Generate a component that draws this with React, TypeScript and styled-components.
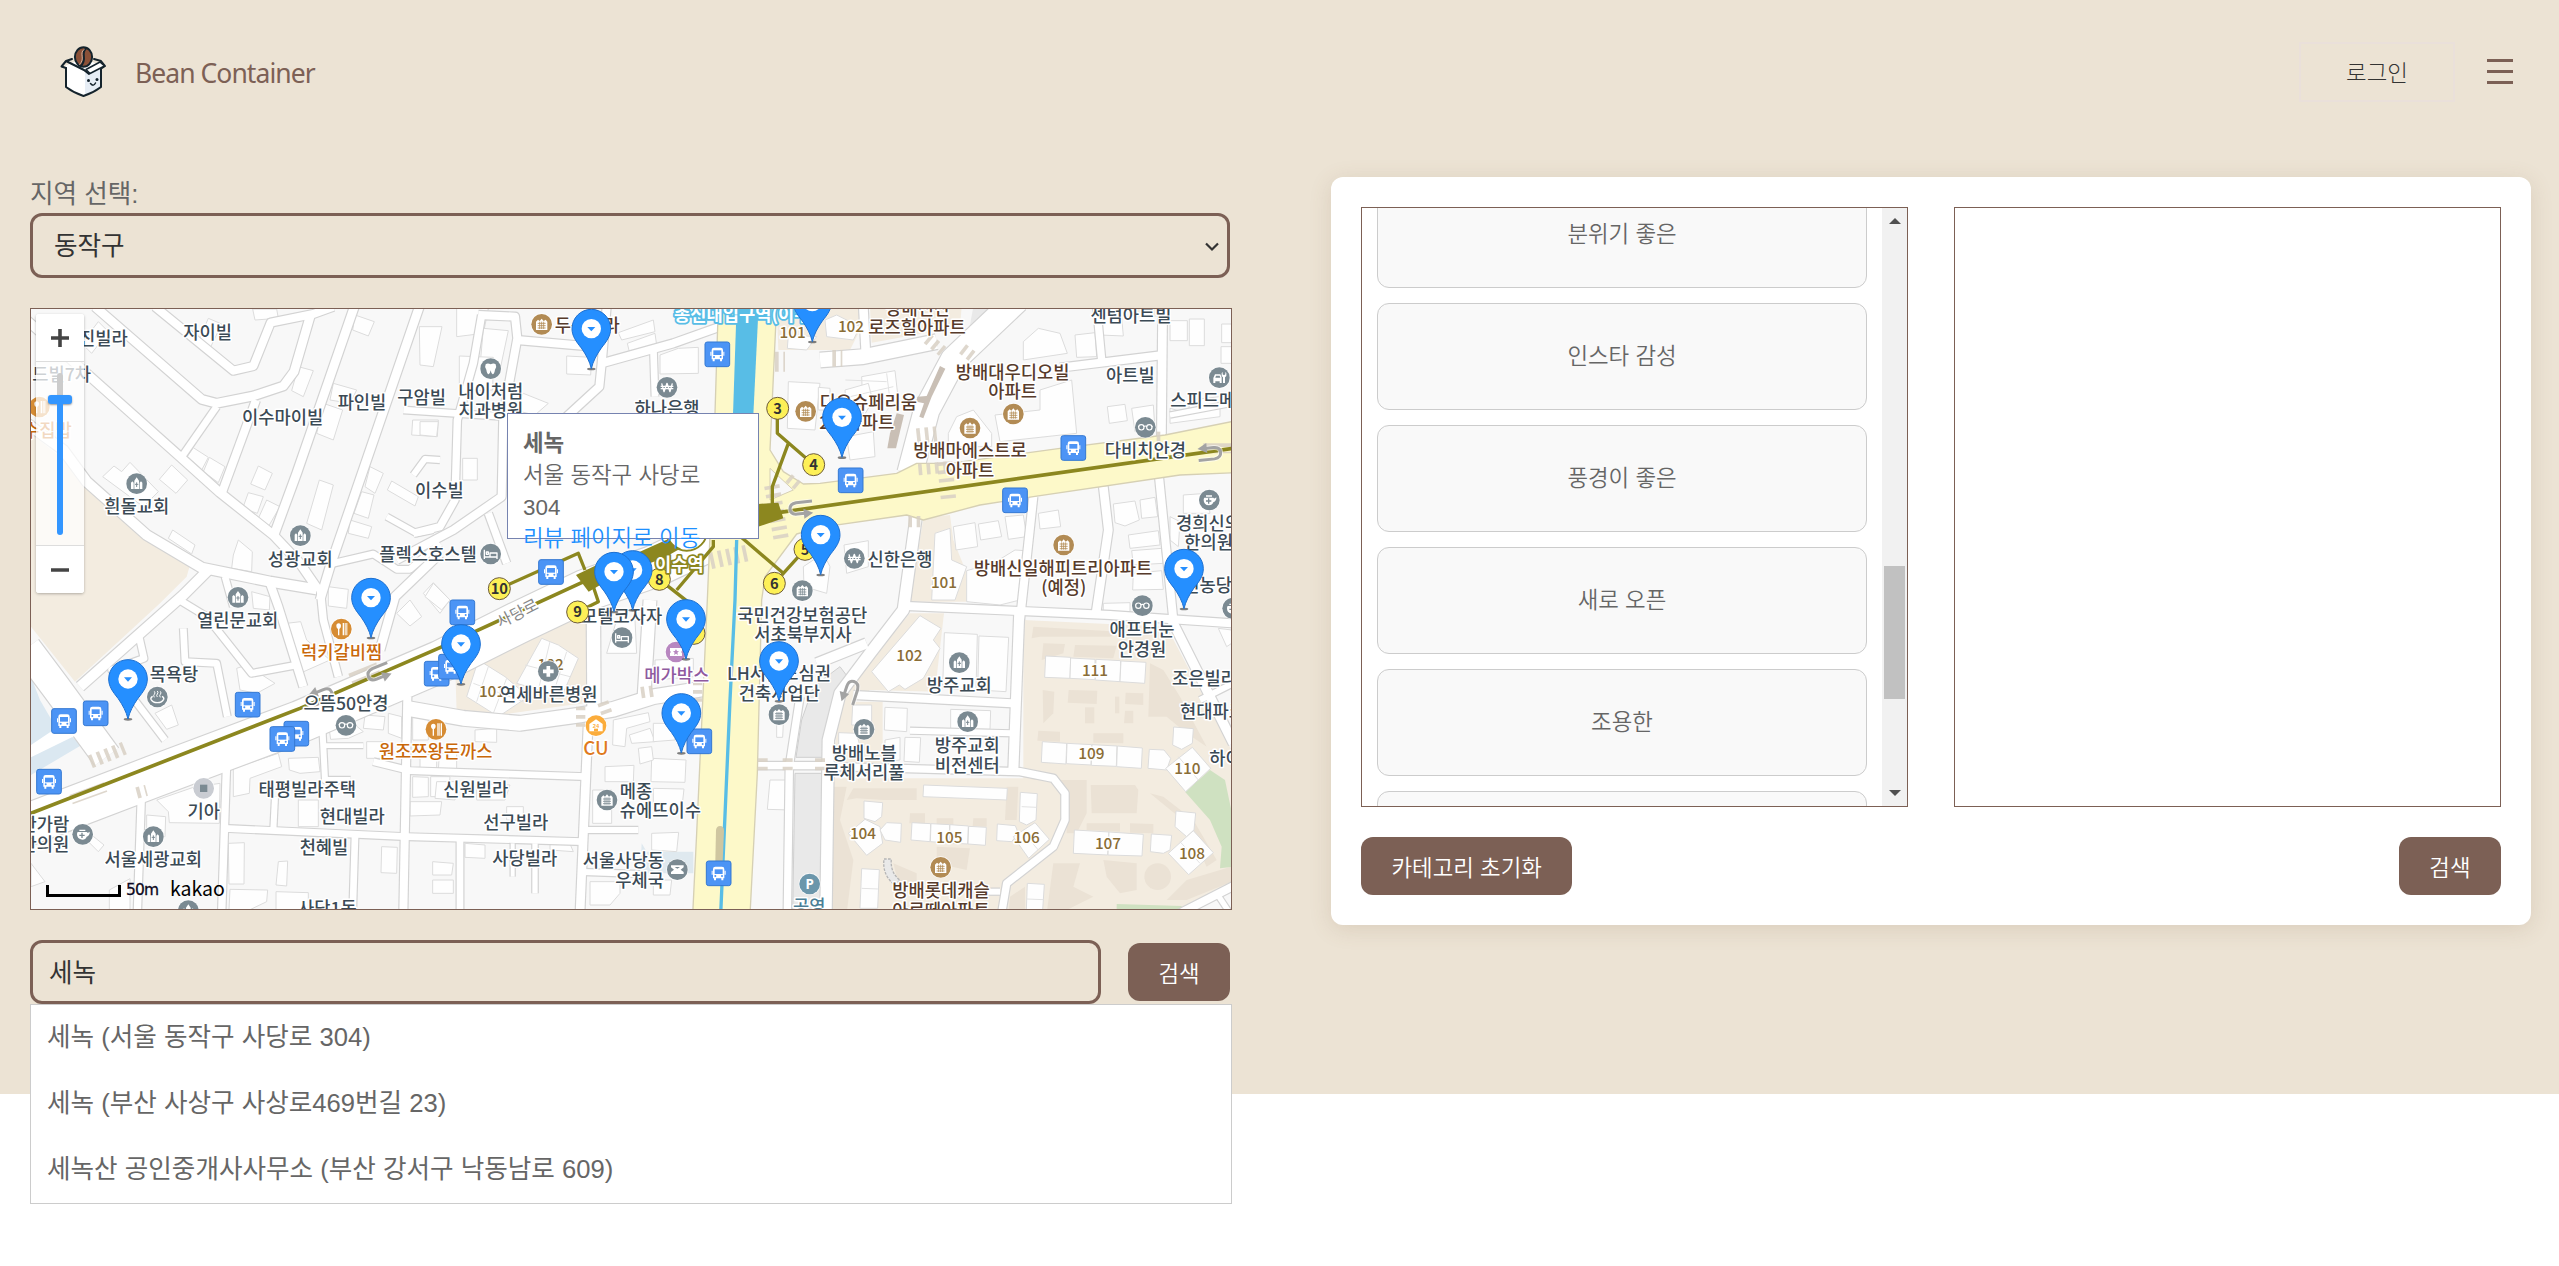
import React from "react";
import styled, { createGlobalStyle } from "styled-components";

const BROWN = "#7c6055";
const CREAM = "#ece3d4";
const UI = `"Liberation Sans", "Noto Sans CJK KR", sans-serif`;
const MAP_FONT = `"Noto Sans CJK KR", "Noto Sans", sans-serif`;

const Global = createGlobalStyle`
  * { box-sizing: border-box; }
  body { margin: 0; min-height: 1266px; background: #fff; font-family: ${UI}; color: #666; }
  button, input { font-family: inherit; }
`;

const Screen = styled.div`
  height: 1266px;
  background: linear-gradient(${CREAM} 1094px, #fff 1094px);
  font-size: 25.6px;
`;
const Header = styled.header`
  height: 177px;
  padding: 42px 46px 0 60px;
  display: flex;
  justify-content: space-between;
  align-items: flex-start;
`;
const Brand = styled.div`
  display: flex;
  align-items: center;
  height: 60px;
  gap: 28px;
`;
const BrandName = styled.span`
  font-family: "Noto Sans", "Open Sans", sans-serif;
  font-size: 26.5px;
  line-height: 60px;
  letter-spacing: -0.95px;
  padding-top: 2px;
  color: ${BROWN};
`;
const HeaderActions = styled.div`
  display: flex;
  align-items: center;
  gap: 32px;
`;
const LoginButton = styled.button`
  width: 156px;
  height: 60px;
  border: 2px solid #eae0da;
  background: transparent;
  color: #333;
  font-size: 22.4px;
  font-weight: 300;
  padding: 0 0 3px;
`;
const MenuButton = styled.button`
  width: 26px;
  height: 25px;
  padding: 0;
  border: 0;
  margin-bottom: 1px;
  background: transparent;
  display: flex;
  flex-direction: column;
  justify-content: space-between;
`;
const MenuBar = styled.span`
  height: 3px;
  background: ${BROWN};
`;

const Main = styled.main`
  display: flex;
  align-items: flex-start;
  padding: 0 28px 0 30px;
  gap: 99px;
`;
const LeftColumn = styled.section`
  width: 1202px;
  display: flex;
  flex-direction: column;
`;
const RegionLabel = styled.label`
  height: 36px;
  line-height: 35px;
  color: #666;
`;
const RegionSelect = styled.div`
  width: 1200px;
  height: 65px;
  border: 3px solid ${BROWN};
  border-radius: 12px;
  padding: 0 8px 4px 21px;
  display: flex;
  align-items: center;
  justify-content: space-between;
  color: #333;

  svg {
    position: relative;
    top: 3px;
  }
`;
const MapFrame = styled.div`
  position: relative;
  width: 1202px;
  height: 602px;
  margin: 30px 0;
  border: 1px solid ${BROWN};
  overflow: hidden;
  background: #f8f8f8;
`;
const SearchRow = styled.form`
  display: flex;
  align-items: center;
  gap: 27px;
  height: 64px;
`;
const SearchInput = styled.input`
  width: 1071px;
  height: 64px;
  border: 3px solid ${BROWN};
  border-radius: 12px;
  padding: 0 15px 3px 16px;
  background: transparent;
  font-size: 25.6px;
  color: #333;
  outline: none;
`;
const BrownButton = styled.button`
  height: 58px;
  padding: 0 30.5px 1px;
  border: 0;
  border-radius: 12px;
  background: ${BROWN};
  color: #fff;
  font-size: 22.4px;
  font-weight: 350;
  white-space: nowrap;
`;
const Suggestions = styled.ul`
  list-style: none;
  margin: 0;
  padding: 0;
  width: 1202px;
  border: 1px solid #ccc;
  background: #fff;
`;
const Suggestion = styled.li`
  height: 66px;
  line-height: 64px;
  padding: 0 16px;
`;

const Card = styled.section`
  width: 1200px;
  height: 748px;
  padding: 30px;
  border-radius: 12px;
  background: #fff;
  box-shadow: 0 4px 22px rgba(124, 96, 60, 0.16);
  display: flex;
  flex-direction: column;
  gap: 30px;
`;
const Panels = styled.div`
  display: flex;
  gap: 46px;
`;
const Panel = styled.div`
  display: flex;
  justify-content: space-between;
  width: 547px;
  height: 600px;
  border: 1px solid ${BROWN};
  overflow: hidden;
`;
const CategoryList = styled.div`
  margin: -27px 0 0 15px;
  width: 490px;
  display: flex;
  flex-direction: column;
  gap: 15px;
`;
const Category = styled.div`
  flex: none;
  height: 107px;
  border: 1px solid #ccc;
  border-radius: 12px;
  background: #f9f9f9;
  display: flex;
  align-items: center;
  justify-content: center;
  font-size: 22.4px;
  font-weight: 350;
  padding-bottom: 5px;
`;
const ScrollTrack = styled.div`
  width: 25px;
  height: 598px;
  padding: 10px 2px;
  background: #f1f1f1;
  display: flex;
  flex-direction: column;
  align-items: center;
`;
const ScrollThumb = styled.div`
  width: 21px;
  height: 133px;
  margin: 342px 0 91px;
  background: #c1c1c1;
`;
const CardActions = styled.div`
  display: flex;
  justify-content: space-between;
`;

const MapSvg = styled.svg`
  display: block;
  width: 1200px;
  height: 600px;
`;
const InfoWindow = styled.div`
  position: absolute;
  left: 476px;
  top: 104px;
  width: 252px;
  height: 126px;
  padding: 14px 15px;
  border: 1px solid #7683b0;
  background: #fff;
  font-size: 22.4px;
  font-weight: 350;
  line-height: 32px;
`;
const InfoName = styled.strong`
  display: block;
`;
const InfoAddress = styled.span`
  display: block;
  line-height: 32px;
`;
const InfoLink = styled.a`
  display: block;
  color: #1e90ff;
  line-height: 29px;
  white-space: nowrap;
`;
const ZoomControl = styled.div`
  position: absolute;
  left: 5px;
  top: 5px;
  width: 48px;
  height: 279px;
  border-radius: 3px;
  background: rgba(255, 255, 255, 0.75);
  box-shadow: 0 1px 3px rgba(0, 0, 0, 0.28);
  display: flex;
  flex-direction: column;
  justify-content: space-between;
  align-items: center;
  overflow: hidden;
`;
const ZoomButton = styled.div<{ $edge: "top" | "bottom" }>`
  width: 48px;
  height: 48px;
  background: #fff;
  ${(p) => (p.$edge === "top" ? "border-bottom" : "border-top")}: 1px solid #ddd;
  display: flex;
  align-items: center;
  justify-content: center;
`;
const ZoomTrack = styled.div`
  width: 24px;
  height: 162px;
  display: flex;
  flex-direction: column;
  align-items: center;
`;
const TrackRest = styled.div`
  width: 6px;
  height: 22px;
  border-radius: 3px 3px 0 0;
  background: #ccc;
`;
const TrackHandle = styled.div`
  width: 24px;
  height: 9px;
  border-radius: 3px;
  background: #3396ff;
  box-shadow: 0 1px 2px rgba(0, 0, 0, 0.4);
`;
const TrackFill = styled.div`
  width: 6px;
  flex: 1;
  border-radius: 0 0 3px 3px;
  background: #3396ff;
`;
const ScaleBar = styled.div`
  position: absolute;
  left: 15px;
  bottom: 12px;
  display: flex;
  align-items: flex-end;
  color: #000;
`;
const ScaleRule = styled.div`
  width: 75px;
  height: 12px;
  border: 3px solid #000;
  border-top: 0;
`;
const ScaleText = styled.span`
  margin: 0 11px 0 5px;
  font: 15.5px/13px "DejaVu Sans", sans-serif;
  letter-spacing: -0.8px;
  color: #0c0820;
  -webkit-text-stroke: 0.3px #0c0820;
  width: 33px;
  height: 13px;
  text-shadow: 0 0 2px #fff;
`;
const KakaoMark = styled.span`
  font: 400 19.5px/20px ${MAP_FONT};
  height: 19px;
`;

/* ---------- map geometry (drawn in a space three times the page scale) ---------- */

const ROADS: [string, number][] = [
  ["225,20 545,298 590,310 700,288 790,258 822,215 870,50", 26],
  ["20,60 480,470 600,578 760,705 840,790 895,870", 26],
  ["405,20 640,212 700,198 752,68 880,42 940,20", 24],
  ["590,320 482,475", 20],
  ["708,300 605,580", 24],
  ["1003,20 830,520 762,705", 26],
  ["1198,20 930,800 900,900", 26],
  ["20,370 130,450 200,545 380,705 545,803 750,845 890,868", 30],
  ["565,810 490,885 180,1160", 30],
  ["20,1045 110,1165 260,1370", 86],
  ["20,1575 400,1430 840,1265 1260,1085 1500,965 1700,870 1900,800 2070,720", 124],
  ["490,985 495,1085 590,1090 622,1250", 20],
  ["470,895 560,950 695,1120 830,1095", 20],
  ["750,850 775,920 850,1160", 24],
  ["355,1000 372,1075 275,1110 435,1320", 20],
  ["615,830 640,920", 20],
  ["940,790 1060,762 1130,808 1170,808 1260,730", 20],
  ["1100,650 1190,700 1240,690", 18],
  ["1180,525 1215,477 1260,480", 18],
  ["1150,330 1460,350", 20],
  ["900,860 910,960 955,1130", 22],
  ["1260,760 1125,890 1080,1050", 26],
  ["620,1380 605,1840", 22],
  ["365,1460 352,1840", 22],
  ["612,1585 1160,1610 1690,1625", 20],
  ["1005,1610 998,1840", 20],
  ["1162,1190 1150,1840", 24],
  ["765,1490 760,1590", 18],
  ["905,1240 915,1440 992,1440", 18],
  ["915,1337 1030,1337", 14],
  ["1060,1385 1170,1412 1700,1430", 20],
  ["1704,1280 1680,1840", 26],
  ["1320,1620 1320,1840", 20],
  ["1478,1630 1478,1730", 12],
  ["1545,1630 1545,1780", 16],
  ["1690,1590 1855,1590", 18],
  ["1690,1716 1860,1722", 18],
  ["1160,1225 1330,1255 1500,1270 1680,1245 1780,1228 1900,1190 2060,1165", 44],
  ["1720,900 1722,1230", 40],
  ["1890,900 1872,1190", 38],
  ["1385,45 1360,190 1312,360 1305,600 1260,680 1180,700", 22],
  ["1375,45 1485,50 1492,115 1450,345 1445,590 1300,690 1130,780", 24],
  ["1490,120 1740,142", 24],
  ["1745,190 1960,130 2100,80", 24],
  ["1760,20 1745,190 1738,260 1640,350", 24],
  ["1900,140 1905,290", 20],
  ["1405,640 1460,790", 22],
  ["2400,180 2530,170 2750,125", 44],
  ["2530,20 2537,150", 26],
  ["2990,0 2800,180 2720,330 2670,520", 76],
  ["3230,20 3246,190", 22],
  ["3428,20 3424,430", 26],
  ["3120,203 3430,165", 24],
  ["3450,345 3635,310", 16],
  ["3040,590 3000,960", 24],
  ["3250,560 3265,690 3228,940", 26],
  ["3416,520 3460,960", 24],
  ["2690,640 2650,930 2550,1060 2460,1180 2425,1320 2418,1840", 34],
  ["2660,918 3270,945 3640,970", 24],
  ["2998,930 2980,1412", 30],
  ["2500,1185 2975,1210", 24],
  ["2190,1397 2440,1397 2440,1400 3000,1415 3100,1435 3135,1480 3135,1560 3100,1640 2960,1750 2945,1840", 22],
  ["2940,1775 2890,1775", 18],
  ["3455,960 3640,1330", 28],
  ["3480,1840 3640,1758", 24],
  ["3590,1780 3630,1840", 16],
  ["2670,1292 2975,1300", 18],
  ["2390,1090 2540,1030", 30],
  ["2340,1190 2308,1397 2302,1840", 22],
  ["3540,1200 3640,1150", 18],
];

const WHITE_BUILDINGS: string[] = [
  "698,27 770,27 775,55 705,60", "1005,45 1063,65 1045,108 998,90", "835,200 880,212 850,290 815,272",
  "910,310 968,330 940,420 890,400", "940,250 1010,270 990,310 930,300", "1178,360 1255,360 1252,410 1175,405",
  "565,55 605,72 570,145 535,125", "235,65 265,95 215,160 185,130",
  "520,443 565,472 545,510 495,480", "568,472 615,500 595,548 550,515", "715,498 757,520 735,570 692,552",
  "685,578 730,590 712,640 668,625", "740,600 780,620 745,680 715,655", "898,540 940,555 905,690 860,670",
  "330,487 415,575 370,620 248,530 282,498 305,515", "455,495 503,540 468,580 418,538",
  "1050,500 1090,520 1065,580 1035,560", "1115,543 1195,590 1185,618 1102,570", "1025,575 1062,585 1045,655 1002,640",
  "458,690 525,735 515,762 445,715", "655,720 697,755 695,815 635,805 640,765", "990,660 1055,680 1045,715 985,700",
  "925,860 985,868 980,925 925,918", "1240,848 1290,900 1260,940 1210,880", "695,875 750,890 748,930 700,925",
  "1170,900 1205,950 1170,978 1130,940", "650,1105 680,1095 765,1150 710,1180 660,1170", "800,970 842,965 860,1020 930,1080 840,1120",
  "455,1215 475,1275 440,1288 405,1240", "640,1405 775,1360 785,1400 690,1435 688,1480 640,1490",
  "805,1375 895,1372 900,1415 840,1420 808,1410", "410,1500 520,1462 600,1450 598,1570 448,1568 445,1535",
  "625,1630 673,1628 672,1752 627,1752", "1085,1640 1132,1642 1130,1720 1083,1718", "775,1685 803,1683 800,1758 768,1755",
  "630,1768 743,1770 740,1805 688,1830 627,1830", "768,1775 865,1778 865,1830 768,1830", "380,1545 437,1550 435,1610 380,1608",
  "268,1770 330,1736 330,1830 268,1830", "33,1690 75,1745 33,1760", "215,1605 252,1635 235,1655 200,1620",
  "925,1270 975,1250 1030,1295 985,1315 932,1318", "1035,1245 1095,1250 1090,1290 1030,1285", "1105,1240 1145,1250 1145,1315 1105,1300",
  "1178,1235 1225,1240 1225,1320 1178,1320", "1040,1325 1090,1325 1090,1375 1040,1375", "835,1500 895,1500 895,1580 835,1580",
  "1178,1430 1225,1432 1225,1490 1178,1492", "1232,1430 1290,1430 1285,1490 1232,1490", "1170,1505 1265,1505 1260,1545 1170,1548",
  "1238,1685 1300,1690 1295,1725 1238,1725", "1238,1740 1300,1740 1300,1780 1238,1780",
  "1198,80 1266,80 1240,200 1200,195", "1310,0 1405,27 1390,100 1310,110",
  "1390,85 1465,92 1440,210 1380,200", "1318,168 1420,172 1418,270 1318,272", "1640,168 1715,172 1712,225 1640,222",
  "1795,98 1900,60 1905,95 1805,120", "1822,130 1905,100 1910,135 1828,155", "1920,165 1975,145 2035,142 2035,220 1920,222",
  "1200,365 1255,365 1250,410 1200,405", "1328,475 1372,475 1372,540 1328,540", "1510,280 1585,310 1545,345 1480,330",
  "1240,850 1290,900 1265,930 1215,890", "2305,245 2400,250 2385,390 2302,385", "2395,262 2430,265 2430,330 2395,330",
  "2305,105 2390,110 2360,150 2302,145", "2415,60 2450,45 2520,80 2500,120 2420,110",
  "2525,230 2625,212 2635,300 2560,300 2530,350", "2475,270 2545,250 2560,310 2480,330",
  "2480,410 2560,395 2565,470 2490,480", "3010,125 3055,85 3120,100 3142,160 3010,180", "3165,105 3225,98 3230,170 3170,172",
  "3235,45 3305,50 3310,108 3240,105", "3450,62 3502,62 3502,122 3450,122", "3508,57 3553,57 3553,137 3508,137",
  "3605,72 3635,72 3635,128 3605,128", "3603,140 3635,140 3635,190 3603,190", "2785,400 2810,350 2860,330 2915,400 2915,440 2785,440",
  "2925,345 3060,330 3060,270 3155,240 3170,400 2940,425", "3262,320 3315,313 3322,362 3268,370", "3335,325 3400,315 3405,390 3345,395",
  "3450,325 3505,340 3510,300 3600,290 3600,350 3450,370", "2800,680 2865,668 2873,740 2808,750", "2875,672 2935,662 2945,710 2882,720",
  "2955,650 3010,645 3020,710 2965,718", "3055,640 3115,630 3122,680 3060,687", "3280,612 3345,603 3358,660 3315,678 3285,668",
  "3360,600 3405,592 3413,650 3365,655", "3325,705 3415,692 3420,735 3330,745", "3335,752 3425,745 3430,790 3340,795",
  "3340,820 3425,812 3430,868 3338,870", "3250,910 3330,908 3330,935 3250,935", "2840,812 2920,790 2985,750 3015,752 3000,900 2940,915 2840,905",
  "2472,735 2545,722 2545,800 2480,820", "3490,585 3560,580 3570,640 3490,640", "3450,650 3480,665 3475,740 3450,720",
  "2745,700 2790,685 2795,780 2840,800 2805,900 2735,900", "2350,800 2410,760 2430,800 2420,880 2352,860",
  "2773,998 2872,1003 2868,1170 2768,1165", "2877,1008 2966,1012 2958,1175 2873,1170", "2555,1115 2700,947 2763,985 2740,1020 2760,1045 2710,1135 2655,1168 2638,1155 2605,1175",
  "2498,1215 2555,1215 2555,1275 2495,1275", "2595,1222 2662,1225 2660,1295 2593,1290", "2655,1312 2702,1313 2698,1387 2652,1384",
  "2595,1320 2640,1312 2640,1380 2595,1385", "2792,1228 2912,1232 2910,1288 2792,1285", "2456,1298 2510,1300 2520,1340 2456,1345",
  "3077,1068 3152,1072 3150,1135 3074,1132", "3152,1074 3225,1078 3225,1139 3150,1135", "3228,1078 3302,1082 3300,1145 3226,1140", "3303,1083 3378,1087 3374,1150 3300,1145",
  "3067,1325 3140,1330 3138,1392 3064,1387", "3141,1330 3215,1334 3213,1395 3139,1391", "3216,1334 3291,1338 3289,1399 3214,1396", "3292,1338 3367,1344 3364,1405 3290,1400",
  "3388,1348 3432,1350 3452,1375 3440,1410 3384,1405", "3461,1281 3520,1286 3517,1330 3485,1348 3458,1335", "3437,1405 3517,1342 3572,1405 3497,1475",
  "2711,1455 2962,1465 2960,1500 2709,1490", "2532,1503 2588,1508 2585,1550 2565,1565 2532,1555", "2485,1600 2535,1558 2580,1580 2588,1630 2540,1666",
  "2600,1568 2644,1570 2642,1627 2595,1620 2580,1590", "2676,1568 2732,1571 2730,1625 2673,1620", "2733,1571 2789,1574 2787,1629 2731,1625",
  "2790,1574 2845,1578 2843,1632 2788,1629", "2846,1579 2899,1582 2896,1636 2844,1632", "2932,1572 2986,1577 2995,1600 2975,1625 2930,1622",
  "3001,1477 3052,1481 3048,1560 3020,1575 2998,1565", "2980,1610 3045,1568 3088,1618 3026,1675", "3163,1590 3267,1596 3263,1665 3160,1660",
  "3267,1596 3370,1603 3366,1668 3264,1665", "3394,1602 3455,1606 3450,1650 3430,1660 3391,1655", "3468,1533 3527,1539 3522,1590 3500,1610 3465,1580",
  "3445,1660 3520,1592 3580,1658 3506,1724", "2525,1706 2578,1709 2573,1825 2520,1825", "3022,1750 3073,1753 3068,1830 3019,1830",
  "3595,985 3635,990 3635,1030 3620,1040", "2250,1440 2312,1440 2308,1530 2242,1528", "2270,1270 2290,1270 2288,1312 2270,1312",
  "1565,1015 1615,1035 1675,1075 1625,1190 1490,1150", "1375,1080 1455,1130 1525,1190 1435,1250 1340,1190",
  "1365,1290 1430,1285 1430,1327 1365,1325", "1200,1370 1250,1358 1250,1410 1200,1412", "1258,1360 1310,1360 1310,1415 1255,1412",
  "1370,1450 1470,1455 1455,1500 1370,1500", "1250,1445 1305,1445 1305,1500 1245,1495", "1755,1400 1842,1396 1840,1445 1755,1445",
  "1780,1260 1885,1238 1890,1265 1820,1285 1815,1340 1778,1335", "1828,1305 1890,1285 1905,1325 1835,1330", "1900,1270 1965,1270 1965,1320 1900,1325",
  "1895,1375 1998,1380 1995,1447 1893,1445", "1855,1345 1895,1340 1900,1380 1860,1392", "1900,1465 1992,1467 1985,1530 1900,1530",
  "1718,1470 1775,1470 1775,1570 1718,1570", "1895,1600 1976,1597 1970,1655 1895,1650", "1590,1620 1645,1620 1660,1655 1590,1650",
  "1710,1745 1800,1745 1800,1780 1770,1815 1710,1815", "1900,1740 1955,1740 1950,1785 1900,1785", "1335,1630 1395,1635 1395,1675 1335,1672",
  "1790,960 1845,960 1850,1060 1760,1060", "1905,1080 2020,1075 2020,1130 1905,1140", "1460,1520 1510,1520 1510,1560 1460,1560",
];

const ROOF_LINES: string[] = [
  "1515,1095 1650,1130", "1590,1025 1555,1170", "1640,1055 1600,1180", "1405,1100 1370,1205", "1360,1150 1510,1205", "1460,1135 1420,1240",
  "2476,240 2600,245", "2490,290 2620,260", "2600,220 2610,300", "2525,1765 2575,1767", "3020,1797 3070,1799", "3005,1520 3050,1522",
  "3020,1610 3055,1650", "3480,1625 3540,1690", "3475,1370 3535,1440",
];

const SHADES: string[] = [
  "3040,980 3300,995 3270,1010 3060,1010 3035,1015", "3070,1030 3135,1032 3130,1060 3065,1080", "3165,1035 3290,1037 3280,1075 3160,1070",
  "3068,1170 3103,1175 3100,1240 3070,1270", "3146,1170 3232,1172 3230,1212 3143,1208", "3195,1222 3223,1222 3223,1270 3195,1270",
  "3285,1190 3298,1190 3298,1240 3285,1240", "3317,1178 3370,1180 3370,1215 3315,1212", "3315,1232 3340,1232 3340,1270 3312,1270",
  "3390,1090 3430,1110 3480,1190 3560,1340 3500,1300 3440,1250 3385,1250", "3055,1292 3120,1295 3120,1325 3052,1322", "3220,1300 3310,1300 3310,1330 3220,1328",
  "3212,1455 3345,1455 3355,1470 3350,1540 3215,1540", "3030,1440 3200,1440 3200,1540 3170,1600 3140,1600 3140,1480 3090,1430",
  "3200,1570 3300,1570 3300,1595 3200,1590", "3330,1570 3400,1572 3400,1600 3330,1598", "2500,1465 2690,1465 2690,1500 2590,1500 2510,1495 2480,1500",
  "2435,1460 2480,1460 2460,1560 2500,1680 2480,1840 2435,1840", "2670,1540 2715,1540 2715,1570 2668,1570", "2750,1555 2800,1555 2800,1575 2750,1572", "2860,1555 2900,1555 2900,1580 2858,1578",
  "2750,1640 2850,1645 2840,1710 2750,1690", "3100,1690 3180,1690 3160,1760 3220,1790 3120,1840 3080,1840", "3250,1680 3350,1690 3350,1770 3300,1780 3260,1730",
  "3385,1700 3430,1710 3430,1760 3390,1765", "3500,1740 3635,1700 3635,1745 3500,1800 3440,1800", "2960,1460 2995,1460 2990,1560 2955,1560", "2620,1690 2690,1720 2690,1760 2640,1770",
  "2970,1790 3015,1760 3015,1840 2965,1840", "3390,1480 3430,1490 3520,1560 3590,1680 3560,1700 3500,1570",
];

const CROSSWALKS: [number, number, number, number, number][] = [
  [262, 1365, 110, 40, -22], [205, 1480, 30, 110, 70], [365, 1475, 30, 34, -15], [1035, 1125, 44, 90, 68],
  [2780, 545, 120, 46, 84], [2720, 405, 60, 46, -6], [2740, 505, 90, 34, -5], [3625, 445, 30, 150, 90],
  [2270, 640, 170, 46, 80], [2130, 770, 120, 50, -12], [2325, 550, 50, 30, 40], [2280, 185, 30, 60, 0],
  [2452, 175, 30, 50, 0], [2745, 135, 60, 34, 40], [2845, 160, 44, 34, 38], [2685, 665, 40, 34, 0],
  [1682, 1250, 60, 28, 90], [1755, 1225, 40, 34, 70], [1885, 1175, 44, 34, -8], [2033, 1175, 60, 28, 90],
  [2228, 1397, 44, 30, 90], [2303, 1397, 44, 30, 90], [2400, 1397, 44, 30, 90], [3420, 410, 20, 30, 0],
];

type Tone = "slate" | "brown" | "orange" | "number" | "purple" | "teal";
const TONES: Record<Tone, string> = {
  slate: "#3b4a55", brown: "#573b2b", orange: "#c9680a", number: "#8a6d36", purple: "#8f5aa0", teal: "#4b7f97",
};
type Anchor = "start" | "middle" | "end";
type LabelSpec = [string, number, number, Tone?, Anchor?];
const LABELS: LabelSpec[] = [
  ["진빌라", 250, 115], ["드빌7차", 125, 222], ["자이빌", 563, 97], ["이수마이빌", 788, 352], ["파인빌", 1026, 307],
  ["구암빌", 1205, 292], ["흰돌교회", 350, 620], ["성광교회", 841, 777], ["플렉스호스텔", 1224, 762], ["이수빌", 1258, 570],
  ["수집밥", 82, 390, "orange"], ["열린문교회", 653, 960], ["목욕탕", 462, 1123], ["럭키갈비찜", 965, 1056, "orange"],
  ["으뜸50안경", 978, 1210], ["태평빌라주택", 862, 1468], ["현대빌라", 997, 1550], ["천혜빌", 912, 1641], ["기아", 551, 1533],
  ["한가람", 148, 1573, "slate", "end"], ["한의원", 148, 1632, "slate", "end"], ["서울세광교회", 400, 1677], ["사당1동", 922, 1826],
  ["원조쯔왕돈까스", 1247, 1355, "orange"], ["두산빌라", 1702, 75, "brown"], ["내이처럼", 1412, 273], ["치과병원", 1412, 332],
  ["하나은행", 1941, 326], ["국민건강보험공단", 2347, 945], ["서초북부지사", 2349, 1002], ["LH서울도심권", 2277, 1120],
  ["건축사업단", 2278, 1179], ["모텔코자자", 1805, 948], ["메가박스", 1970, 1125, "purple"], ["연세바른병원", 1586, 1183],
  ["신원빌라", 1367, 1468], ["선구빌라", 1487, 1566], ["사당빌라", 1514, 1676], ["메종", 1799, 1473, "slate", "start"],
  ["슈에뜨이수", 1799, 1531, "slate", "start"], ["서울사당동", 1932, 1682, "slate", "end"], ["우체국", 1932, 1740, "slate", "end"],
  ["공영", 2368, 1818, "teal"], ["방배신산", 2693, 24, "brown"],
  ["로즈힐아파트", 2691, 82, "brown"], ["디오슈페리움", 2545, 308, "brown"], ["2차아파트", 2510, 367, "brown"],
  ["센텀아트빌", 3333, 47], ["방배대우디오빌", 2978, 216, "brown"], ["아파트", 2978, 275, "brown"],
  ["방배마에스트로", 2850, 452, "brown"], ["아파트", 2850, 511, "brown"], ["아트빌", 3331, 226],
  ["스피드메이트", 3451, 302, "slate", "start"], ["다비치안경", 3376, 452], ["경희신의", 3468, 670, "slate", "start"],
  ["한의원", 3493, 728, "slate", "start"], ["신한은행", 2640, 777], ["방배신일해피트리아파트", 3129, 805, "brown"],
  ["(예정)", 3131, 863, "brown"], ["선농당", 3490, 857, "slate", "start"], ["방주교회", 2818, 1157], ["방주교회", 2842, 1337],
  ["비전센터", 2842, 1395], ["방배노블", 2533, 1360], ["루체서리풀", 2532, 1418], ["애프터눈", 3366, 988], ["안경원", 3366, 1047],
  ["방배롯데캐슬", 2763, 1770, "brown"], ["아르떼아파트", 2763, 1830, "brown"], ["조은빌라", 3456, 1134, "slate", "start"],
  ["현대파크", 3480, 1235, "slate", "start"], ["하이", 3568, 1376, "slate", "start"],
];
const BLOCK_NUMBERS: LabelSpec[] = [
  ["102", 1592, 1094, "number"], ["101", 1416, 1173, "number"], ["101", 2318, 96, "number"], ["102", 2493, 80, "number"],
  ["101", 2772, 847, "number"], ["102", 2668, 1066, "number"], ["111", 3225, 1111, "number"], ["109", 3214, 1361, "number"],
  ["110", 3502, 1406, "number"], ["104", 2529, 1600, "number"], ["105", 2788, 1613, "number"], ["106", 3020, 1613, "number"],
  ["107", 3264, 1631, "number"], ["108", 3516, 1659, "number"],
];

const MapText = styled.text<{ $fill: string; $size: number }>`
  font: 500 ${(p) => p.$size}px ${MAP_FONT};
  fill: ${(p) => p.$fill};
  stroke: #fff;
  stroke-width: 9px;
  stroke-linejoin: round;
  paint-order: stroke;
`;
const StationText = styled.text<{ $line: string }>`
  font: 700 53px ${MAP_FONT};
  fill: #fff;
  stroke: ${(p) => p.$line};
  stroke-width: 11px;
  stroke-linejoin: round;
  paint-order: stroke;
`;
const ExitText = styled.text`
  font: 700 44px ${MAP_FONT};
  fill: #333;
`;
const RoadText = styled.text`
  font: 400 48px ${MAP_FONT};
  fill: #888;
  stroke: #fff;
  stroke-width: 8px;
  paint-order: stroke;
`;
const GlyphText = styled.text<{ $size: number }>`
  font: 700 ${(p) => p.$size}px "Noto Sans", sans-serif;
  fill: #fff;
`;

const BUSES: [number, number][] = [
  [132, 1263], [227, 1240], [87, 1445], [683, 1214], [829, 1301], [787, 1317], [1250, 1121], [1293, 1100], [1327, 937],
  [1593, 816], [2092, 163], [2492, 541], [3160, 444], [2985, 601], [2038, 1324], [2096, 1720],
];
type PoiKind =
  | "church" | "bath" | "glasses" | "tooth" | "bank" | "bed" | "cross" | "food" | "store" | "movie"
  | "office" | "post" | "parking" | "pot" | "car" | "apartment" | "square";
const POIS: [PoiKind, number, number][] = [
  ["church", 350, 551], ["church", 841, 707], ["church", 654, 892], ["church", 400, 1610], ["church", 2818, 1088],
  ["church", 2843, 1265], ["church", 505, 1832], ["bath", 412, 1191], ["glasses", 978, 1276], ["glasses", 3376, 382],
  ["glasses", 3367, 917], ["tooth", 1412, 206], ["bank", 1941, 262], ["bank", 2503, 775], ["bed", 1412, 762],
  ["bed", 1806, 1013], ["cross", 1585, 1114], ["food", 964, 987], ["food", 1248, 1288], ["food", 58, 321],
  ["store", 1728, 1277], ["movie", 1968, 1056], ["office", 1761, 1500], ["office", 2347, 872], ["office", 2277, 1244],
  ["office", 2532, 1288], ["post", 1972, 1709], ["parking", 2369, 1752], ["pot", 188, 1603], ["pot", 3568, 600],
  ["pot", 3638, 925], ["car", 3598, 233], ["apartment", 1565, 73], ["apartment", 2357, 334], ["apartment", 2980, 342],
  ["apartment", 2850, 384], ["apartment", 3131, 735], ["apartment", 2762, 1702], ["square", 551, 1465],
];
const EXITS: [string, number, number][] = [
  ["3", 2273, 325], ["4", 2381, 494], ["5", 2355, 748], ["6", 2263, 850], ["7", 2022, 1000], ["8", 1918, 838],
  ["9", 1673, 936], ["10", 1438, 866],
];
const PINS: [number, number][] = [
  [2377, 5], [1714, 86], [2466, 352], [2402, 704], [1053, 893], [3492, 806], [1838, 810], [1782, 815], [1998, 957],
  [1323, 1032], [2277, 1083], [324, 1137], [1984, 1239],
];

function BusStop({ x, y }: { x: number; y: number }) {
  return (
    <g transform={`translate(${x} ${y})`}>
      <rect x={-37} y={-37} width={74} height={74} rx={7} fill="#4c94f5" stroke="#3377d2" strokeWidth={3} />
      <path
        d="M-17,15V-13q0-7 7-7H10q7 0 7 7V15H14v6H8V15H-8v6H-14V15ZM-21-8h3v12h-3ZM18-8h3v12h-3Z"
        fill="#fff"
      />
      <path d="M-12-12H12V2H-12Z" fill="#4c94f5" />
      <circle cx={-10} cy={8} r={3} fill="#4c94f5" />
      <circle cx={10} cy={8} r={3} fill="#4c94f5" />
    </g>
  );
}

const POI_FILL: Partial<Record<PoiKind, string>> = {
  food: "#d68c34", store: "#fbac3b", movie: "#b887c0", apartment: "#b28b54", parking: "#6b96ab", square: "#c9ccd2",
};

function PoiGlyph({ kind }: { kind: PoiKind }) {
  const line = { fill: "none", stroke: "#fff", strokeWidth: 4 };
  switch (kind) {
    case "church":
      return (
        <>
          <path d="M-17,16V-3l4-4 4 4V16ZM9,16V-3l4-4 4 4V16ZM-7,16V-9L0-19 7-9V16Z" fill="#fff" />
          <path d="M0-4V10M-5,2H5" stroke="#7b8a92" strokeWidth={3} />
        </>
      );
    case "bath":
      return (
        <>
          <path d="M-9-17q4 5 0 9t0 9M0-18q4 5 0 9t0 9M9-17q4 5 0 9t0 9" {...line} strokeWidth={3} />
          <path d="M-14-2q-7 4-5 9 5 10 19 10T19,7q2-5-5-9" {...line} />
        </>
      );
    case "glasses":
      return (
        <>
          <circle cx={-12} r={8} {...line} strokeWidth={3.5} />
          <circle cx={12} r={8} {...line} strokeWidth={3.5} />
          <path d="M-5-2q5-4 10 0M-22-2h3M19-2h3" {...line} strokeWidth={3.5} />
        </>
      );
    case "tooth":
      return <path d="M-15-13q6-5 15 0 9-5 15 0 4 7-2 16-2 13-7 14-4-1-6-12-2 11-6 12-5-1-7-14-6-9-2-16Z" fill="#fff" />;
    case "bank":
      return <path d="M-16-12l7 25 9-25 9 25 7-25M-19-3H19M-19,4H19" {...line} />;
    case "bed":
      return <path d="M-19-13V15M-19,9H19M19,15V-3H-2V9M-13-6h6v7h-6Z" {...line} />;
    case "cross":
      return <path d="M0-16V16M-16,0H16" stroke="#fff" strokeWidth={11} />;
    case "food":
      return (
        <path d="M-15-9a7 8 0 0 1 14 0q0 6-5 9V19h-4V0q-5-3-5-9ZM5-18h3V19H4V-18ZM10-18h3V19h-3ZM15-18h3V19h-3Z" fill="#fff" />
      );
    case "store":
      return (
        <>
          <path d="M0-19L20-5V17H-20V-5Z" fill="#fff" />
          <path d="M-6,17V9H6v8Z" fill="#fbac3b" />
          <text y={7} textAnchor="middle" fontSize={17} fontWeight={700} fontFamily="Liberation Sans" fill="#fbac3b">24</text>
        </>
      );
    case "movie":
      return (
        <>
          <path d="M-18-12H18v8q-5 3 0 8v8H-18V4q5-4 0-8Z" fill="#fff" />
          <path d="M0-9l3 6 6 1-5 4 2 7-6-4-6 4 2-7-5-4 6-1Z" fill="#b887c0" />
        </>
      );
    case "office":
    case "apartment":
      return (
        <>
          <path d="M-17,17V-8l6-6 5 4 6-7 6 7 6-4 5 6V17Z" fill="#fff" />
          <path
            d="M-12-3H12M-12,4H12M-12,11H12M-6-8V14M0-8V14M6-8V14"
            stroke={kind === "office" ? "#7b8a92" : "#b28b54"}
            strokeWidth={2.4}
          />
        </>
      );
    case "post":
      return <path d="M-19-13H19V-7L10,0 19,7v6H-19V7L-10,0-19-7ZM-8-8L0-3 8-8Z" fill="#fff" fillRule="evenodd" />;
    case "parking":
      return <GlyphText $size={40} y={15} textAnchor="middle">P</GlyphText>;
    case "pot":
      return (
        <>
          <path d="M-15-7H12q3 5 9-1 1 11-9 15-3 9-13 9-16-1-16-16 0-5 2-7ZM-10-14H8v4H-10Z" fill="#fff" />
          <path d="M-2-5V11M-10,3H6" stroke="#7b8a92" strokeWidth={4} />
        </>
      );
    case "car":
      return <path d="M-18,16V1l5-11H3l4 9V16H1V11H-12v5ZM10-17v7l4 3 4-3v-7l3 3v9l-4 4V16H11V-1L7-5v-9ZM-10-6l-2 6H3L1-6Z" fill="#fff" fillRule="evenodd" />;
    case "square":
      return <rect x={-11} y={-11} width={22} height={22} fill="#7b8a92" />;
  }
}

function Pin({ x, y }: { x: number; y: number }) {
  return (
    <g transform={`translate(${x} ${y})`}>
      <ellipse cy={121} rx={13} ry={4} fill="#555" opacity={0.75} />
      <path
        d="M0,120C-5,98-16,78-30,58C-46,38-58,22-58,0A58,58 0 0 1 58,0C58,22 46,38 30,58C16,78 5,98 0,120Z"
        fill="#258fff"
        stroke="#1d6fd0"
        strokeWidth={3}
      />
      <circle r={29} fill="#fff" />
      <path d="M-12-5H12L0,8Z" fill="#258fff" />
    </g>
  );
}

function UTurn({ x, y, r }: { x: number; y: number; r: number }) {
  return (
    <g transform={`translate(${x} ${y}) rotate(${r})`} fill="none">
      <path d="M36-18H-12q-20 2-20 18t20 16H12" stroke="#fff" strokeWidth={15} opacity={0.6} />
      <path d="M36-18H-12q-20 2-20 18t20 16H12" stroke="#a3a3a3" strokeWidth={9} />
      <path d="M8,2L36,17 8,32Z" fill="#a3a3a3" />
    </g>
  );
}

function MapLabels({ items }: { items: LabelSpec[] }) {
  return (
    <>
      {items.map(([t, x, y, tone = "slate", anchor = "middle"]) => (
        <MapText
          key={`${t}-${x}-${y}`}
          x={x}
          y={y + (tone === "number" ? 17 : 20)}
          textAnchor={anchor}
          $fill={TONES[tone]}
          $size={tone === "number" ? 46 : 53}
        >
          {t}
        </MapText>
      ))}
    </>
  );
}

function CityMap() {
  return (
    <MapSvg viewBox="31 309 1200 600">
      <g transform="translate(20 300) scale(0.333333)" strokeLinejoin="round">
        <rect x={0} y={0} width={3700} height={1850} fill="#f8f8f8" />
        <g fill="#f3ece0">
          <path d="M33,400L120,470 195,545 380,715 510,795 500,830 420,910 165,1145 33,980Z" />
          <path d="M3010,960L3440,980 3640,1360V1770L3490,1840H2430V1435H3010Z" />
          <path d="M2670,940H2772L2745,1175 2550,1170 2500,1205H2588V1390H2435L2470,1190 2560,1070Z" />
          <path d="M2710,655L2790,645 2800,720 2840,820V905H2670Z" />
          <path d="M2270,20H2520V90L2490,150H2275Z" />
          <path d="M2550,20H2825L2820,80 2555,128Z" />
          <path d="M1310,1240L1305,1080 1540,940 1700,950V1210L1650,1215 1440,1245Z" />
          <path d="M3330,27H3430V50H3330Z" />
        </g>
        <g fill="#ebe2d5">
          {SHADES.map((p) => <polygon key={p} points={p} />)}
          <circle cx={3413} cy={1730} r={40} />
        </g>
        <path d="M33,1130L60,1200 95,1260 185,1335 33,1425Z" fill="#dbe8f1" />
        <path d="M1865,1630L1880,1655H2020V1720H1860Z" fill="#dfe9ef" />
        <g fill="#cfe1c1">
          <path d="M3570,1410L3615,1440 3640,1560V1700L3600,1705 3605,1640 3570,1560 3495,1475Z" />
          <path d="M3290,1812L3485,1818V1840H3290Z" />
        </g>
        <g fill="#e9e9e9" stroke="#cfcfcf" strokeWidth={3}>
          <path d="M2325,1420H2410V1840H2318Z" />
          <path d="M2328,1372L2345,1260 2380,1160 2460,1100 2490,1140 2440,1230 2418,1372Z" />
          <path d="M2860,20H2960L2840,130Z" stroke="none" />
        </g>
        <g fill="#fefefe" stroke="#dcdcdc" strokeWidth={3}>
          {WHITE_BUILDINGS.map((p) => <polygon key={p} points={p} />)}
        </g>
        <g fill="none" stroke="#e2e2e2" strokeWidth={3}>
          {ROOF_LINES.map((p) => <polyline key={p} points={p} />)}
        </g>
        <g fill="none" stroke="#d3d3d3">
          {ROADS.map(([p, w]) => <polyline key={p} points={p} strokeWidth={w + 7} />)}
        </g>
        <g fill="none" stroke="#fff">
          {ROADS.map(([p, w]) => <polyline key={p} points={p} strokeWidth={w} />)}
        </g>
        <path d="M33,1335L100,1290 180,1245 200,1290 33,1372Z" fill="#fff" />
        <path
          d="M2095,15L2085,340 2062,900 2030,1600 2018,1845H2190L2212,1420 2225,900 2235,830 2330,702 2400,682 2660,645 2710,660 2880,615 3040,590 3480,525 3645,518V363L3435,405 3120,445 2790,490H2690L2630,520 2400,550 2350,552 2290,515 2250,450 2270,15Z"
          fill="#fdf9c9"
          stroke="#d6d0b4"
          strokeWidth={4}
        />
        <path d="M2250,505L2320,570 2250,600Z" fill="#f8f8f8" stroke="#d6d0b4" strokeWidth={3} />
        {CROSSWALKS.map(([x, y, w, h, r]) => (
          <g key={`${x}-${y}`} transform={`translate(${x} ${y}) rotate(${r})`}>
            <line x1={-w / 2} x2={w / 2} stroke="#d9d1c5" strokeWidth={h} strokeDasharray="11 14" opacity={0.85} />
          </g>
        ))}
        <g fill="#c9bfb5">
          <path d="M2760,198L2776,206 2735,290 2710,355 2698,350 2712,310 2690,305 2692,290 2720,288Z" />
          <path d="M2630,340L2652,345 2628,445 2602,445 2610,400Z" />
        </g>
        <path d="M2592,1677h22q-4 40 26,64l-16,14q-38-30-32-78Z" fill="#e9e9e9" stroke="#b5b5b5" strokeWidth={4} strokeDasharray="8 4" />
        <path d="M2150,15H2216L2200,345H2139Z" fill="#58bde6" />
        <path d="M2150,720L2145,900 2130,1200 2102,1845" fill="none" stroke="#58bde6" strokeWidth={10} />
        <path d="M2088,1590q2-12 12-12 12 0 12 14L2106,1730H2085Z" fill="#cfc6a0" />
        <g fill="none" stroke="#8c871f" strokeWidth={11}>
          <path d="M20,1545L840,1225 1260,1043 1680,850 1950,730M2280,637L3645,444" />
          <path d="M2272,350V400L2381,494M2305,430L2257,560V620M2150,700L2290,820 2355,748M2290,820L2263,850M1438,866L1675,760 1695,810M1720,860L1735,905 1673,936M1918,838L2022,920M2080,720V740L1970,870" strokeWidth={10} />
        </g>
        <g fill="#8c871f">
          <path d="M1668,825L1735,793 1752,848 1706,875Z" />
          <path d="M1838,765L1950,715 1990,712 2000,735 1930,775 1860,800Z" />
          <path d="M2215,612L2275,608 2290,655 2212,681Z" />
        </g>
        <circle cx={2000} cy={690} r={62} fill="none" stroke="#8c871f" strokeWidth={6} />
        <circle cx={2000} cy={690} r={58} fill="#fff" />
        <UTurn x={2342} y={625} r={-6} />
        <UTurn x={3570} y={460} r={174} />
        <UTurn x={1075} y={1118} r={-22} />
        <UTurn x={905} y={1188} r={158} />
        <UTurn x={2492} y={1175} r={108} />
        <RoadText transform="translate(1500 955) rotate(-27)" textAnchor="middle">사당로</RoadText>

        <MapLabels items={BLOCK_NUMBERS} />
        {POIS.map(([kind, x, y]) => (
          <g key={`${x}-${y}`} transform={`translate(${x} ${y})`}>
            <circle r={33} fill="#fff" opacity={0.8} />
            <circle r={31} fill={POI_FILL[kind] ?? "#7b8a92"} />
            <PoiGlyph kind={kind} />
          </g>
        ))}
        <MapLabels items={LABELS} />
        <MapText x={1728} y={1364} textAnchor="middle" $fill="#e07a1e" $size={56}>CU</MapText>
        {BUSES.map(([x, y]) => <BusStop key={`${x}-${y}`} x={x} y={y} />)}
        {EXITS.map(([n, x, y]) => (
          <g key={n} transform={`translate(${x} ${y})`}>
            <circle r={33} fill="#fdf057" stroke="#6c5a3c" strokeWidth={3} />
            <ExitText y={16} textAnchor="middle">{n}</ExitText>
          </g>
        ))}
        <StationText x={1978} y={812} textAnchor="middle" $line="#8c871f">이수역</StationText>
        <StationText x={1962} y={62} $line="#58bde6">총신대입구역(이수)</StationText>
        {PINS.map(([x, y]) => <Pin key={`${x}-${y}`} x={x} y={y} />)}
      </g>
    </MapSvg>
  );
}

function Logo() {
  return (
    <svg width="47" height="52" viewBox="0 0 47 52" fill="none" strokeLinejoin="round" strokeLinecap="round">
      <path d="M5 20L23 12 42 20 41 41 23.500 50 6 41Z" fill="#fff" />
      <path d="M25 27L41 21V41L25 49Z" fill="#e6edf5" />
      <path d="M6 22V41Q14 47 23.500 50 33 47 41 41V23" stroke="#14232c" strokeWidth="2" />
      <path d="M6 22L1.500 20.500 6 15 12 13M6 15L24 24 29 28M34 13L41 15 45 20 42 22" stroke="#14232c" strokeWidth="2" />
      <path d="M26 23.500L40 16 44.500 20 30 27.500Z" fill="#fff" stroke="#14232c" strokeWidth="1.600" />
      <ellipse cx="23.500" cy="11" rx="8.600" ry="9.800" fill="#8b5138" stroke="#14232c" strokeWidth="2" />
      <path d="M26 2.500C20 8 28 12 21 20" stroke="#14232c" strokeWidth="2" />
      <path d="M24 3.500C18.500 8 26 12 19.500 18.500" stroke="#d9b8a6" strokeWidth="0.900" />
      <circle cx="28.500" cy="34.500" r="1.500" fill="#14232c" />
      <circle cx="37" cy="33.500" r="1.500" fill="#14232c" />
      <path d="M30.500 37.500Q33.500 41 35.500 37" stroke="#14232c" strokeWidth="1.500" />
    </svg>
  );
}

const CATEGORIES = ["분위기 좋은", "인스타 감성", "풍경이 좋은", "새로 오픈", "조용한", ""];
const SUGGESTIONS = [
  "세녹 (서울 동작구 사당로 304)",
  "세녹 (부산 사상구 사상로469번길 23)",
  "세녹산 공인중개사사무소 (부산 강서구 낙동남로 609)",
];

export default function App() {
  return (
    <>
      <Global />
      <Screen>
        <Header>
          <Brand>
            <Logo />
            <BrandName>Bean Container</BrandName>
          </Brand>
          <HeaderActions>
            <LoginButton>로그인</LoginButton>
            <MenuButton aria-label="menu">
              <MenuBar />
              <MenuBar />
              <MenuBar />
            </MenuButton>
          </HeaderActions>
        </Header>
        <Main>
          <LeftColumn>
            <RegionLabel>지역 선택:</RegionLabel>
            <RegionSelect>
              동작구
              <svg width="14" height="10" viewBox="0 0 14 10">
                <path d="M1 1.500L7 7.500 13 1.500" fill="none" stroke="#333" strokeWidth="2.200" />
              </svg>
            </RegionSelect>
            <MapFrame>
              <CityMap />
              <InfoWindow>
                <InfoName>세녹</InfoName>
                <InfoAddress>서울 동작구 사당로 304</InfoAddress>
                <InfoLink>리뷰 페이지로 이동</InfoLink>
              </InfoWindow>
              <ZoomControl>
                <ZoomButton $edge="top">
                  <svg width="18" height="18" viewBox="0 0 18 18">
                    <path d="M9 0V18M0 9H18" stroke="#444" strokeWidth="3.600" />
                  </svg>
                </ZoomButton>
                <ZoomTrack>
                  <TrackRest />
                  <TrackHandle />
                  <TrackFill />
                </ZoomTrack>
                <ZoomButton $edge="bottom">
                  <svg width="18" height="18" viewBox="0 0 18 18">
                    <path d="M0 9H18" stroke="#444" strokeWidth="3.600" />
                  </svg>
                </ZoomButton>
              </ZoomControl>
              <ScaleBar>
                <ScaleRule />
                <ScaleText>50m</ScaleText>
                <KakaoMark>kakao</KakaoMark>
              </ScaleBar>
            </MapFrame>
            <SearchRow>
              <SearchInput defaultValue="세녹" />
              <BrownButton type="button">검색</BrownButton>
            </SearchRow>
            <Suggestions>
              {SUGGESTIONS.map((s) => <Suggestion key={s}>{s}</Suggestion>)}
            </Suggestions>
          </LeftColumn>
          <Card>
            <Panels>
              <Panel>
                <CategoryList>
                  {CATEGORIES.map((c) => <Category key={c}>{c}</Category>)}
                </CategoryList>
                <ScrollTrack>
                  <svg width="12" height="6" viewBox="0 0 12 6"><path d="M6 0L12 6H0Z" fill="#505050" /></svg>
                  <ScrollThumb />
                  <svg width="12" height="6" viewBox="0 0 12 6"><path d="M6 6L12 0H0Z" fill="#505050" /></svg>
                </ScrollTrack>
              </Panel>
              <Panel />
            </Panels>
            <CardActions>
              <BrownButton>카테고리 초기화</BrownButton>
              <BrownButton>검색</BrownButton>
            </CardActions>
          </Card>
        </Main>
      </Screen>
    </>
  );
}
